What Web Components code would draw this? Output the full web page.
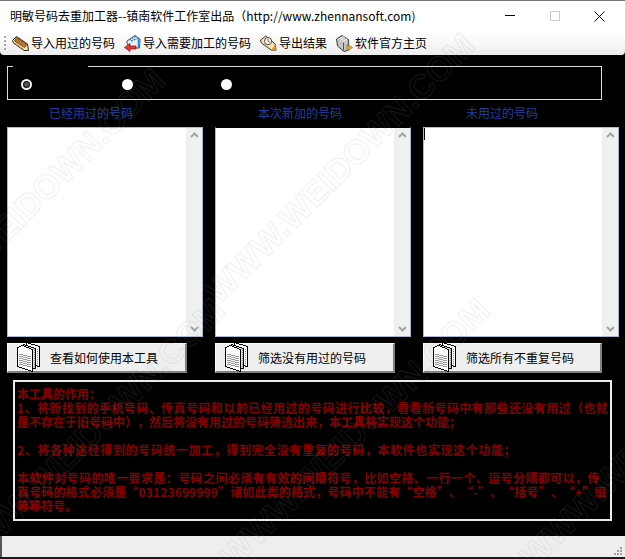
<!DOCTYPE html>
<html lang="zh-CN">
<head>
<meta charset="utf-8">
<title>明敏号码去重加工器</title>
<style>
html,body{margin:0;padding:0;background:#000;}
body{font-family:"Noto Sans CJK SC","Noto Sans",sans-serif;font-size:12px;text-spacing-trim:space-all;}
</style>
</head>
<body>
<app-window>
  <title-bar>明敏号码去重加工器--镇南软件工作室出品（http://www.zhennansoft.com)</title-bar>
  <tool-bar>
    <tool-item icon="book" width="103">导入用过的号码</tool-item>
    <tool-item icon="import" width="127">导入需要加工的号码</tool-item>
    <tool-item icon="export" width="67">导出结果</tool-item>
    <tool-item icon="home" width="91">软件官方主页</tool-item>
  </tool-bar>
  <main-area>
    <radio-box></radio-box>
    <pane-row>
      <list-pane label="已经用过的号码" pad="42" button="查看如何使用本工具" top="0"></list-pane>
      <list-pane label="本次新加的号码" pad="43" button="筛选没有用过的号码" top="1"></list-pane>
      <list-pane label="未用过的号码" pad="43" button="筛选所有不重复号码" top="0" caret="1" bw="179"></list-pane>
    </pane-row>
    <note-panel>
      <div>本工具的作用：</div>
      <div style="letter-spacing:.42px">1、将新找到的手机号码、传真号码和以前已经用过的号码进行比较，看看新号码中有那些还没有用过（也就</div>
      <div>是不存在于旧号码中），然后将没有用过的号码筛选出来，本工具将实现这个功能；</div>
      <div>&nbsp;</div>
      <div style="letter-spacing:.6px">2、将各种途径得到的号码统一加工，得到完全没有重复的号码，本软件也实现这个功能；</div>
      <div>&nbsp;</div>
      <div style="letter-spacing:.4px">本软件对号码的唯一要求是：号码之间必须有有效的间隔符号，比如空格、一行一个、逗号分隔都可以，传</div>
      <div style="letter-spacing:.15px">真号码的格式必须是“03123699999”诸如此类的格式，号码中不能有“空格”、“-”、“括号”、“+”缀</div>
      <div>等等符号。</div>
    </note-panel>
  </main-area>
  <status-bar></status-bar>
  <water-mark></water-mark>
</app-window>
<script>
function def(name, css, html, init){
  customElements.define(name, class extends HTMLElement{
    constructor(){super();this.attachShadow({mode:'open'});}
    connectedCallback(){
      const h = typeof html==='function'?html(this):html;
      this.shadowRoot.innerHTML='<style>'+css+'</style>'+h;
      if(init)init(this);
    }
  });
}
const ICONS={
 book:`<svg width="17" height="15" viewBox="0 0 17 15"><path d="M0.5 4.5L4.5 0.5L15.5 8L16.5 14.5L12 14.5L1.5 7Z" fill="#f4dfae" stroke="#3a2a10"/><path d="M4.5 1.5L15 8.5L12.5 11.5L2.5 5Z" fill="#b9762a" stroke="#5a3a10" stroke-width=".7"/><path d="M3 7L12 13.5" stroke="#d2a860"/></svg>`,
 import:`<svg width="17" height="17" viewBox="0 0 17 17"><path d="M3 6L11 0.5L16 4L15.5 13L9 13L3 9Z" fill="#e8f0fa" stroke="#222" stroke-width=".8"/><path d="M5 5L12 1M7 6L14 3" stroke="#2f7fd0" stroke-width="1.4" stroke-dasharray="2 1"/><path d="M14.5 4V13" stroke="#2a8fe0" stroke-width="1.6"/><path d="M0.5 12.5L6 8.5V11H12V14H6V16.5Z" fill="#e83838" stroke="#7a1010" stroke-width=".7"/></svg>`,
 export:`<svg width="18" height="16" viewBox="0 0 18 16"><path d="M0.5 5L6 0.5L16 9L17 15.5L12 15.5L1.5 8Z" fill="#f4e4b8" stroke="#33260e"/><circle cx="8.5" cy="6" r="3.8" fill="#f8f6ea" stroke="#333" stroke-width=".9"/><path d="M8.5 3.8V6.2L10.5 7" stroke="#444" stroke-width=".8" fill="none"/><path d="M12 15L16.5 9.5L17 15Z" fill="#e8961e"/></svg>`,
 home:`<svg width="17" height="17" viewBox="0 0 17 17"><path d="M0.5 4L6 0.5L12.5 4.5L13 15L8 16.5L1.5 11Z" fill="#c4c4c4" stroke="#2c2c2c" stroke-width=".9"/><path d="M2.5 4L7.5 1.5M4 5.5L9 2.5M6 7L11 4" stroke="#f2f2f2"/><path d="M7.5 7.5V15.5" stroke="#555"/><path d="M11 9.5L16.5 12.5L11 16Z" fill="#f0a22c" stroke="#8a5a10" stroke-width=".6"/></svg>`
};
const DOC=`<svg width="24" height="30" viewBox="0 0 24 30" shape-rendering="crispEdges">
<path d="M9.5 0.5L22.5 4.5V24.5L9.5 22Z" fill="#fff" stroke="#000"/>
<path d="M6.5 2.5L18.5 6.5V27L6.5 24Z" fill="#ddd" stroke="#000"/>
<path d="M0.5 5.5L5.5 3.5L15.5 7.5V29.5L0.5 24.5Z" fill="#fff" stroke="#000"/>
<path d="M17 8V26M20 7V24" stroke="#888" stroke-dasharray="1 1"/>
<path d="M2 12L14 15M2 14L14 17M2 16L14 19M2 18L14 21M2 20L14 23M2 22L14 25" stroke="#999" fill="none"/>
</svg>`;

def('app-window',`:host{display:flex;flex-direction:column;position:relative;width:625px;height:559px;box-sizing:border-box;overflow:hidden;background:#000;border-top:1px solid #777;border-bottom:2px solid #1a1a1a;}`,`<slot></slot>`);

def('title-bar',`:host{display:flex;align-items:center;height:30px;flex:none;background:#fff;color:#000;font:12px/16px "Noto Sans CJK SC","Noto Sans",sans-serif;padding-right:3px;}
.t{padding-left:10px;flex:1;white-space:nowrap;}
.c{display:flex;height:30px;align-items:center;}
.b{width:45px;height:30px;display:flex;align-items:center;justify-content:center;}`,`<div class="t"><slot></slot></div><div class="c">
<div class="b"><svg width="10" height="10"><path d="M0 4.5H10" stroke="#000"/></svg></div>
<div class="b"><svg width="10" height="10"><rect x=".5" y=".5" width="9" height="9" fill="none" stroke="#ccc"/></svg></div>
<div class="b"><svg width="11" height="11"><path d="M.5 .5L10.5 10.5M10.5 .5L.5 10.5" stroke="#000" fill="none"/></svg></div></div>`);

def('tool-bar',`:host{display:flex;align-items:center;height:24px;flex:none;box-sizing:border-box;padding-left:4px;gap:9px;background:linear-gradient(#fff,#f8f8f8 50%,#ececec);border-radius:0 0 4px 4px;}
.g{width:2px;height:15px;margin-right:-3px;background:repeating-linear-gradient(#aaa 0 2px,transparent 2px 4px);}`,`<div class="g"></div><slot></slot>`);

def('tool-item',`:host{display:flex;align-items:center;gap:2px;color:#000;font:12px/16px "Noto Sans CJK SC",sans-serif;white-space:nowrap;box-sizing:border-box;}
.i{width:17px;height:17px;display:flex;align-items:center;flex:none;}`,
 el=>`<div class="i">${ICONS[el.getAttribute('icon')]}</div><slot></slot>`,
 el=>{el.style.width=el.getAttribute('width')+'px';});

def('main-area',`:host{display:block;flex:1;min-height:0;background:#000;box-sizing:border-box;padding:11px 0 0 7px;}`,`<slot></slot>`);

def('radio-box',`:host{display:block;width:595px;height:34px;margin-bottom:5px;}
.top{display:flex;height:1px;}.top i{display:block;background:#ddd;}
.box{height:33px;box-sizing:border-box;border:1px solid #ddd;border-top:0;display:flex;align-items:center;padding:3px 0 0 13px;}
.r{width:11px;height:11px;border-radius:50%;background:#fff;flex:none;box-sizing:border-box;}
.r.on{border:2px solid #f4f4f4;background:radial-gradient(circle,#555 0 2px,#111 2.5px);}`,
`<div class="top"><i style="width:6px"></i><i style="width:75px;background:#000"></i><i style="flex:1"></i></div>
<div class="box"><div class="r on"></div><div class="r" style="margin-left:90px"></div><div class="r" style="margin-left:88px"></div></div>`);

def('pane-row',`:host{display:flex;gap:12px;}`,`<slot></slot>`);

def('list-pane',`:host{display:flex;flex-direction:column;width:196px;flex:none;}
.l{height:16px;font:12px/16px "Noto Sans CJK SC",sans-serif;color:#1c409c;margin-bottom:6px;white-space:nowrap;}
.m{height:210px;box-sizing:border-box;background:#fff;border:1px solid #a9bad6;display:flex;margin-bottom:6px;}
.m.t{border-top-color:#000;border-top-width:1px;}
.c{flex:1;}
.caret{width:1px;height:12px;background:#000;}
.s{width:16px;background:#f0f0f0;display:flex;flex-direction:column;justify-content:space-between;align-items:center;padding:4px 0;box-sizing:border-box;}
.b{height:30px;box-sizing:border-box;background:#efefef;border-top:1px solid #fafafa;border-left:1px solid #fafafa;border-right:2px solid #808080;border-bottom:2px solid #808080;display:flex;align-items:center;padding-left:9px;font:12px/16px "Noto Sans CJK SC",sans-serif;color:#000;white-space:nowrap;}
.b svg{margin-right:9px;flex:none;margin-top:-1px}`,
el=>`<div class="l" style="padding-left:${el.getAttribute('pad')}px">${el.getAttribute('label')}</div>
<div class="m${el.getAttribute('top')==='1'?' t':''}"><div class="c">${el.hasAttribute('caret')?'<div class="caret"></div>':''}</div>
<div class="s"><svg width="9" height="6"><path d="M1 5L4.5 1.5L8 5" fill="none" stroke="#a6a6a6" stroke-width="2"/></svg><svg width="9" height="6"><path d="M1 1L4.5 4.5L8 1" fill="none" stroke="#a6a6a6" stroke-width="2"/></svg></div></div>
<div class="b" style="width:${el.getAttribute('bw')||180}px">${DOC}<span>${el.getAttribute('button')}</span></div>`);

def('note-panel',`:host{display:block;box-sizing:border-box;width:599px;height:141px;margin:7px 0 0 6px;border:2px solid #ececec;padding:5px 0 0 2px;color:#860000;font:700 12px/14px "Noto Sans CJK SC",sans-serif;white-space:nowrap;}`,`<slot></slot>`);

def('status-bar',`:host{display:flex;justify-content:flex-end;align-items:flex-end;height:21px;flex:none;background:#eee;padding:0 3px 2px 0;box-sizing:border-box;border-left:2px solid #555;}`,
`<svg width="8" height="8" shape-rendering="crispEdges"><g fill="#a0a0a0"><rect x="6" y="0" width="2" height="2"/><rect x="3" y="3" width="2" height="2"/><rect x="6" y="3" width="2" height="2"/><rect x="0" y="6" width="2" height="2"/><rect x="3" y="6" width="2" height="2"/><rect x="6" y="6" width="2" height="2"/></g></svg>`);

def('water-mark',`:host{display:block;position:absolute;inset:0;pointer-events:none;overflow:hidden;}
span{position:absolute;transform-origin:0 100%;transform:rotate(-45deg);font:700 34px/40px "Liberation Sans",sans-serif;color:transparent;-webkit-text-stroke:1px rgba(150,150,150,.17);white-space:nowrap;}`,
()=>{
  const pts=[[-85,345],[225,310],[-25,575],[240,575],[540,575]];
  return pts.map(p=>`<span style="left:${p[0]}px;top:${p[1]-40}px" aria-hidden="true">WWW.WEIDOWN.COM</span>`).join('');
});
</script>
</body>
</html>
